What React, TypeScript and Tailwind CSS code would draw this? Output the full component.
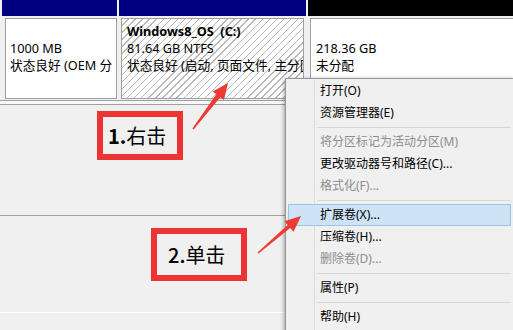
import React from "react";

const font = { fontFamily: '"Noto Sans", "Noto Sans CJK SC", sans-serif' };

function MenuItem({ label, disabled, active }: { label: string; disabled?: boolean; active?: boolean }) {
  if (active) {
    return (
      <div className="h-[22px] mx-[2px] flex items-center pl-[31px] bg-[#cde3f6] border border-[#9bc4e8] text-black">
        {label}
      </div>
    );
  }
  return (
    <div className={"h-[22px] mx-[2px] flex items-center pl-[32px] " + (disabled ? "text-[#8d8d8d]" : "text-black")}>
      {label}
    </div>
  );
}

function Sep() {
  return (
    <div className="h-[7px] flex items-center ml-[31px] mr-[2px]">
      <div className="h-px w-full bg-[#d7d7d7]" />
    </div>
  );
}

export default function App() {
  return (
    <div className="relative w-[513px] h-[330px] overflow-hidden bg-[#f0f0f0] text-[12px]" style={font}>
      {/* top partitions row */}
      <div className="flex pl-[2px] gap-[2px] h-[100px] text-[12.7px]">
        <div className="w-[115px] flex flex-col">
          <div className="h-[16px] bg-[#000080]" />
          <div className="flex-1 pt-[2px] pl-[3px] pb-[1px]">
            <div className="h-full border border-[#a0a0a0] bg-white pl-[4px] pt-[4px] leading-[17px] whitespace-nowrap overflow-hidden">
              <div>&nbsp;</div>
              <div>1000 MB</div>
              <div>状态良好 (OEM 分</div>
            </div>
          </div>
        </div>
        <div className="w-[187px] flex flex-col">
          <div className="h-[16px] bg-[#000080]" />
          <div className="flex-1 pt-[2px] px-[2px] pb-[1px]">
            <div className="h-full border border-[#a0a0a0] bg-[repeating-linear-gradient(135deg,#ffffff_0px,#ffffff_4px,#b8b8b8_4px,#b8b8b8_5px)] pl-[5px] pt-[4px] leading-[17px] whitespace-nowrap overflow-hidden">
              <div className="font-bold">Windows8_OS{"\u00a0"} (C:)</div>
              <div>81.64 GB NTFS</div>
              <div>状态良好 (启动, 页面文件, 主分区</div>
            </div>
          </div>
        </div>
        <div className="w-[205px] flex flex-col">
          <div className="h-[16px] bg-black" />
          <div className="flex-1 pt-[2px] pl-[2px] pb-[1px]">
            <div className="h-full border border-r-0 border-[#a0a0a0] bg-white pl-[5px] pt-[4px] leading-[17px] whitespace-nowrap overflow-hidden">
              <div>&nbsp;</div>
              <div>218.36 GB</div>
              <div>未分配</div>
            </div>
          </div>
        </div>
      </div>

      {/* lines below */}
      <div className="h-px bg-[#a0a0a0]" />
      <div className="h-[3px] bg-[#f8f8f8]" />
      <div className="h-px bg-[#a0a0a0]" />
      <div className="h-[110px]" />
      <div className="h-px bg-[#a0a0a0]" />
      <div className="h-[96px]" />
      <div className="h-px bg-white" />

      {/* annotation boxes */}
      <div className="absolute left-[97px] top-[111px] w-[86px] h-[49px] border-[6px] border-[#ee3333] bg-[#f0f0f0] flex items-center pl-[5px] text-[20px] text-black leading-none" style={{ fontFamily: '"Noto Sans CJK SC", sans-serif' }}>
        <span className="font-bold">1.</span>
        <span>右击</span>
      </div>
      <div className="absolute left-[151px] top-[228px] w-[96px] h-[53px] border-[6px] border-[#ee3333] bg-[#f0f0f0] flex items-center pl-[11px] text-[20px] text-black leading-none" style={{ fontFamily: '"Noto Sans CJK SC", sans-serif' }}>
        <span className="font-medium">2.</span>
        <span>单击</span>
      </div>

      {/* context menu */}
      <div className="absolute left-[285px] top-[78px] w-[229px] h-[260px] bg-[#f0f0f0] border border-[#979797] shadow-[-1px_1px_4px_rgba(0,0,0,0.35)] pt-[1px]">
        <div className="absolute left-[28px] top-0 bottom-0 w-px bg-[#dcdcdc]" />
        <div className="relative">
          <MenuItem label="打开(O)" />
          <MenuItem label="资源管理器(E)" />
          <Sep />
          <MenuItem label="将分区标记为活动分区(M)" disabled />
          <MenuItem label="更改驱动器号和路径(C)..." />
          <MenuItem label="格式化(F)..." disabled />
          <Sep />
          <MenuItem label="扩展卷(X)..." active />
          <MenuItem label="压缩卷(H)..." />
          <MenuItem label="删除卷(D)..." disabled />
          <Sep />
          <MenuItem label="属性(P)" />
          <Sep />
          <MenuItem label="帮助(H)" />
        </div>
      </div>

      {/* arrows */}
      <svg className="absolute left-0 top-0 pointer-events-none" width="513" height="330" viewBox="0 0 513 330">
        <polygon
          fill="#ee3a35"
          points="192.4,128.6 216.3,94.2 212.7,91.5 228,83 224.0,100.0 220.3,97.2 193.6,129.4"
        />
        <polygon
          fill="#ee3a35"
          points="257.5,252.5 287.6,224.9 284.4,221.2 301,216 293.5,231.8 290.2,227.9 258.5,253.5"
        />
      </svg>
    </div>
  );
}
